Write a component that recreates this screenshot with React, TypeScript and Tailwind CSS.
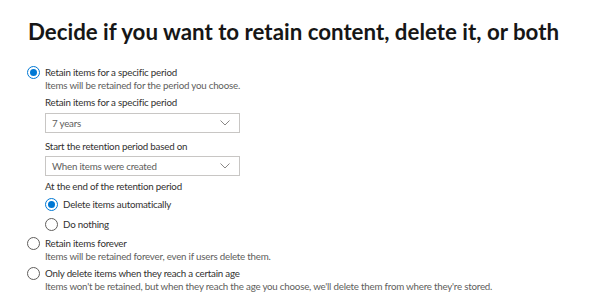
function Radio({ checked }: { checked?: boolean }) {
    return (
        <span
            className={
                "flex h-[13px] w-[13px] shrink-0 items-center justify-center rounded-full border bg-white " +
                (checked ? "border-[#0078d4]" : "border-[#605e5c]")
            }
        >
            {checked && <span className="h-[7px] w-[7px] rounded-full bg-[#0078d4]" />}
        </span>
    );
}

function Option({ label, desc, checked }: { label: string; desc?: string; checked?: boolean }) {
    return (
        <div className="flex flex-col">
            <div className="flex h-[14px] items-center gap-[5px]">
                <Radio checked={checked} />
                <span className="whitespace-nowrap text-[#323130]">{label}</span>
            </div>
            {desc && <div className="whitespace-nowrap pl-[18px] leading-[13px] text-[#605e5c]">{desc}</div>}
        </div>
    );
}

function Select({ value }: { value: string }) {
    return (
        <div className="flex h-[20px] w-[195px] items-center justify-between border border-[#c8c6c4] pl-[6px] pr-[9px] text-[#605e5c]">
            <span>{value}</span>
            <svg width="10" height="6" viewBox="0 0 10 6" fill="none" stroke="#8a8886" strokeWidth="1">
                <path d="M0.5 0.5 L5 5 L9.5 0.5" />
            </svg>
        </div>
    );
}

export default function App() {
    return (
        <div className="h-[300px] w-[600px] overflow-hidden bg-white px-[27px] pt-[18px] font-['Lato',sans-serif] text-[9.75px] leading-[14px] tracking-[-0.22px]">
            <h1 className="ml-[1px] whitespace-nowrap text-[22.3px] leading-[28px] font-bold tracking-normal text-[#161616]">
                Decide if you want to retain content, delete it, or both
            </h1>
            <div className="mt-[19px] flex flex-col">
                <Option
                    checked
                    label="Retain items for a specific period"
                    desc="Items will be retained for the period you choose."
                />
                <div className="flex flex-col pl-[18px]">
                    <div className="mt-[3px] text-[#323130]">Retain items for a specific period</div>
                    <div className="mt-[4px]">
                        <Select value="7 years" />
                    </div>
                    <div className="mt-[6px] text-[#323130]">Start the retention period based on</div>
                    <div className="mt-[3px]">
                        <Select value="When items were created" />
                    </div>
                    <div className="mt-[3px] text-[#323130]">At the end of the retention period</div>
                    <div className="mt-[4px] flex flex-col gap-[6px]">
                        <Option checked label="Delete items automatically" />
                        <Option label="Do nothing" />
                    </div>
                </div>
                <div className="mt-[5px]">
                    <Option
                        label="Retain items forever"
                        desc="Items will be retained forever, even if users delete them."
                    />
                </div>
                <div className="mt-[3px]">
                    <Option
                        label="Only delete items when they reach a certain age"
                        desc="Items won't be retained, but when they reach the age you choose, we'll delete them from where they're stored."
                    />
                </div>
            </div>
        </div>
    );
}
